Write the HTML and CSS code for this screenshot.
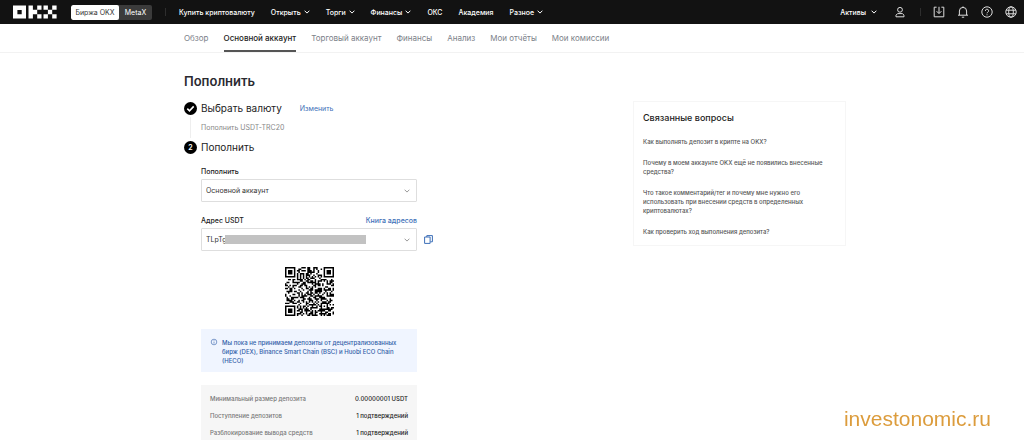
FILE: index.html
```html
<!DOCTYPE html>
<html lang="ru">
<head>
<meta charset="utf-8">
<meta name="viewport" content="width=device-width, initial-scale=1">
<title>Пополнить</title>
<link rel="stylesheet" href="styles.css">
</head>
<body>
<svg class="defs" aria-hidden="true">
  <symbol id="chevron" viewBox="0 0 6 4"><path d="M.6.7 3 3.1 5.4.7" fill="none" stroke="currentColor"/></symbol>
</svg>
<header class="topbar">
  <a class="logo" href="#" aria-label="OKX">
    <svg viewBox="0 0 44 14" fill="#fff" aria-hidden="true">
      <path fill-rule="evenodd" d="M0 .5h13v13H0zM4.4 5v4.2h4.3V5z"/>
      <path d="M15.5.5h4.4v4.3h4.3v4.4h-4.3v4.3h-4.4zM24.2.5h4.3v4.3h-4.3zM24.2 9.2h4.3v4.3h-4.3zM30.5.5h4.4v4.3h-4.4zM39.2.5h4.4v4.3h-4.4zM34.9 4.8h4.3v4.4h-4.3zM30.5 9.2h4.4v4.3h-4.4zM39.2 9.2h4.4v4.3h-4.4z"/>
    </svg>
  </a>
  <div class="switch">
    <button class="switch-item active" type="button">Биржа OKX</button>
    <button class="switch-item" type="button">MetaX</button>
  </div>
  <span class="divider"></span>
  <nav class="menu">
    <a href="#">Купить криптовалюту</a>
    <a href="#">Открыть<svg class="chev"><use href="#chevron"/></svg></a>
    <a href="#">Торги<svg class="chev"><use href="#chevron"/></svg></a>
    <a href="#">Финансы<svg class="chev"><use href="#chevron"/></svg></a>
    <a href="#">ОКС</a>
    <a href="#">Академия</a>
    <a href="#">Разное<svg class="chev"><use href="#chevron"/></svg></a>
  </nav>
  <div class="tools">
    <a class="assets" href="#">Активы<svg class="chev"><use href="#chevron"/></svg></a>
    <button class="tool" type="button" aria-label="Профиль"><svg viewBox="0 0 12 12"><circle cx="6" cy="3.800" r="2.400"/><path d="M3.600 7.600h4.800L10 9.200v1.600H2V9.200z"/></svg></button>
    <span class="divider"></span>
    <button class="tool" type="button" aria-label="Загрузить"><svg viewBox="0 0 12 12"><path d="M3.600 1.200H1.200v9.600h9.600V1.200H8.400M6 .8v6.400M3.600 5.200 6 7.600l2.400-2.400"/></svg></button>
    <button class="tool" type="button" aria-label="Уведомления"><svg viewBox="0 0 12 12"><path d="M2.400 9V5a3.600 3.600 0 0 1 7.200 0v4M1 9.200h10M4.800 11.200h2.400M6 .4v1"/></svg></button>
    <button class="tool" type="button" aria-label="Помощь"><svg viewBox="0 0 12 12"><circle cx="6" cy="6" r="5.200"/><path d="M4.400 4.900a1.600 1.600 0 1 1 2.400 1.300Q6 6.600 6 7.300M6 8.300v1"/></svg></button>
    <button class="tool" type="button" aria-label="Язык"><svg viewBox="0 0 12 12"><circle cx="6" cy="6" r="5.200"/><ellipse cx="6" cy="6" rx="2.300" ry="5.200"/><path d="M1.200 4.200h9.600M1.200 7.800h9.600"/></svg></button>
  </div>
</header>
<nav class="tabs">
  <div class="container tabs-row">
    <a href="#">Обзор</a>
    <a class="current" href="#">Основной аккаунт</a>
    <a href="#">Торговый аккаунт</a>
    <a href="#">Финансы</a>
    <a href="#">Анализ</a>
    <a href="#">Мои отчёты</a>
    <a href="#">Мои комиссии</a>
  </div>
</nav>
<main class="container page">
  <h1>Пополнить</h1>
  <div class="columns">
    <section class="deposit">
      <div class="step">
        <svg class="badge" viewBox="0 0 13 13" aria-hidden="true"><circle cx="6.500" cy="6.500" r="6.500"/><path d="M3.300 6.700 5.500 8.800l4.200-4.400" fill="none" stroke="#fff" stroke-width="1.600"/></svg>
        <h2>Выбрать валюту</h2>
        <a class="link change" href="#">Изменить</a>
      </div>
      <p class="chosen">Пополнить USDT-TRC20</p>
      <div class="step">
        <span class="badge number">2</span>
        <h2>Пополнить</h2>
      </div>
      <div class="form">
        <div class="label-row"><label for="account">Пополнить</label></div>
        <div class="field">
          <select id="account"><option>Основной аккаунт</option></select>
          <svg class="chev arrow"><use href="#chevron"/></svg>
        </div>
        <div class="label-row second"><label for="address">Адрес USDT</label><a class="link" href="#">Книга адресов</a></div>
        <div class="field">
          <select id="address"><option>TLpTg</option></select>
          <span class="mask"></span>
          <svg class="chev arrow"><use href="#chevron"/></svg>
          <button class="copy" type="button" aria-label="Копировать"><svg viewBox="0 0 9 9"><path d="M2.800 2V.6h5.600v6.200H6.400M.6 2h5.500v6.400H.6z"/></svg></button>
        </div>
        <svg class="qr" id="qr" viewBox="0 0 33 33" role="img" aria-label="QR-код адреса"></svg>
        <div class="notice">
          <svg viewBox="0 0 8 8" aria-hidden="true"><circle cx="4" cy="4" r="2.800"/><path d="M4 3.600v2M4 2.200v.7"/></svg>
          <p>Мы пока не принимаем депозиты от децентрализованных бирж (DEX), Binance Smart Chain (BSC) и Huobi ECO Chain (HECO)</p>
        </div>
        <dl class="details">
          <div><dt>Минимальный размер депозита</dt><dd>0.00000001 USDT</dd></div>
          <div><dt>Поступление депозитов</dt><dd>1 подтверждений</dd></div>
          <div><dt>Разблокирование вывода средств</dt><dd>1 подтверждений</dd></div>
        </dl>
      </div>
    </section>
    <aside class="faq">
      <h3>Связанные вопросы</h3>
      <a href="#">Как выполнять депозит в крипте на OKX?</a>
      <a href="#">Почему в моем аккаунте OKX ещё не появились внесенные средства?</a>
      <a href="#">Что такое комментарий/тег и почему мне нужно его использовать при внесении средств в определенных криптовалютах?</a>
      <a href="#">Как проверить ход выполнения депозита?</a>
    </aside>
  </div>
</main>
<div class="watermark">investonomic.ru</div>
<script src="qr.js"></script>
</body>
</html>
```
FILE: styles.css
```css
* { box-sizing: border-box; }
body {
  margin: 0;
  background: #fff;
  color: #222;
  font-family: Inter, "Noto Sans", sans-serif;
  font-size: 7px;
  line-height: 9px;
}
a { color: inherit; text-decoration: none; }
h1, h2, h3, p, dl, dd { margin: 0; }
button { padding: 0; border: 0; background: none; color: inherit; font: inherit; }
.defs { position: absolute; width: 0; height: 0; }
.chev { width: 6px; height: 4px; flex: none; }

.topbar { display: flex; align-items: center; height: 24px; padding: 0 7px 0 13px; background: #121212; color: #fff; }
.logo { display: flex; }
.logo svg { width: 44px; height: 14px; }
.switch { display: flex; height: 15px; margin-left: 14px; border-radius: 2px; overflow: hidden; background: #3b3b3b; }
.switch-item { width: 33px; }
.switch-item.active { width: 48px; border-radius: 2px; background: #fff; color: #333; }
.divider { width: 1px; height: 8px; background: #2e2e2e; }
.switch + .divider { margin: 0 13px; }
.menu { display: flex; gap: 16px; font-weight: 500; white-space: nowrap; }
.menu a, .assets { display: flex; align-items: center; gap: 3px; }
.tools { display: flex; align-items: center; margin-left: auto; }
.assets { margin-right: 17px; gap: 5px; font-weight: 500; }
.tool { display: flex; margin-left: 12px; }
.assets + .tool { margin: 0 14px 0 0; }
.tool svg { width: 12px; height: 12px; fill: none; stroke: #ddd; }

.container { max-width: 668px; margin: 0 auto; padding-left: 6px; }
.tabs { border-bottom: 1px solid #f2f2f2; }
.tabs-row { display: flex; gap: 15px; height: 28px; color: #7c8189; font-size: 8px; line-height: 28px; white-space: nowrap; }
.tabs .current { border-bottom: 2px solid #555; color: #222; font-weight: 500; }

h1 { padding-top: 19px; font-size: 13px; line-height: 18px; font-weight: 600; color: #2a2a30; }
h2 { font-size: 10px; line-height: 14px; font-weight: 400; }
.columns { display: flex; justify-content: space-between; align-items: flex-start; padding-top: 11px; }
.deposit { width: 246px; }
.step { display: flex; align-items: center; gap: 4px; }
.badge { width: 13px; height: 13px; flex: none; }
.number { border-radius: 50%; background: #000; color: #fff; text-align: center; line-height: 13px; font-weight: 600; }
.link { color: #3d6fb8; }
.change { margin-left: 14px; }
.chosen { margin: 2px 0 2px 6px; padding: 6px 0 6px 10px; border-left: 1px solid #eee; color: #888; }
.form { width: 233px; padding: 13px 0 0 17px; }
.label-row { display: flex; justify-content: space-between; height: 11px; font-weight: 500; }
.label-row.second { margin-top: 14px; }
.field { position: relative; margin-top: 1px; }
.field select { display: block; width: 100%; height: 23px; padding: 0 4px; border: 1px solid #dedede; border-radius: 1px; background: #fff; color: #333; font: inherit; appearance: none; }
.arrow { position: absolute; right: 7px; top: 10px; color: #999; }
.mask { position: absolute; left: 24px; top: 7px; width: 141px; height: 9px; background: #c2c2c2; }
.copy { position: absolute; left: 223px; top: 7px; }
.copy svg { display: block; width: 9px; height: 9px; fill: none; stroke: #3d6fb8; }
.qr { display: block; width: 49px; height: 49px; margin: 16px auto 13px; }
.notice { display: flex; gap: 4px; padding: 9px 14px 7px 9px; background: #f0f5ff; color: #315ea8; font-size: 6px; font-weight: 500; }
.notice svg { width: 8px; height: 8px; flex: none; fill: none; stroke: #315ea8; stroke-width: 0.6; }
.details { display: grid; gap: 3px; margin-top: 13px; padding: 7px 9px 0; background: #f6f6f6; font-size: 6px; font-weight: 500; }
.details div { display: flex; justify-content: space-between; line-height: 14px; }
.details dt { color: #777; }
.details dd { color: #222; }

.faq { display: grid; gap: 12px; width: 213px; padding: 9px 12px 9px 9px; border: 1px solid #f6f6f6; color: #555; font-size: 6px; font-weight: 500; }
h3 { font-size: 9px; line-height: 14px; font-weight: 500; color: #222; }
.watermark { position: fixed; right: 33px; bottom: 9px; color: #dc9c3c; font: 21px/24px "Liberation Sans", sans-serif; }
```
FILE: qr.js
```js
// Fills the QR symbol: three finders, one alignment mark, timing lines and data modules.
const size = 33;
let seed = 20231;
const random = () => (seed = (seed * 16807) % 2147483647) / 2147483647;
const ring = (x, y, cx, cy) => Math.max(Math.abs(x - cx), Math.abs(y - cy));
function isDark(x, y) {
  const data = random() < 0.5;
  for (const [cx, cy] of [[3, 3], [29, 3], [3, 29]]) {
    const r = ring(x, y, cx, cy);
    if (r <= 4) return r === 3 || r < 2;
  }
  const a = ring(x, y, 26, 26);
  if (a <= 2) return a !== 1;
  if (x === 6 || y === 6) return (x + y) % 2 === 0;
  return data;
}
let d = "";
for (let y = 0; y < size; y++)
  for (let x = 0; x < size; x++)
    if (isDark(x, y)) d += `M${x} ${y}h1v1h-1z`;
const path = document.createElementNS("http://www.w3.org/2000/svg", "path");
path.setAttribute("d", d);
document.getElementById("qr").append(path);
```
